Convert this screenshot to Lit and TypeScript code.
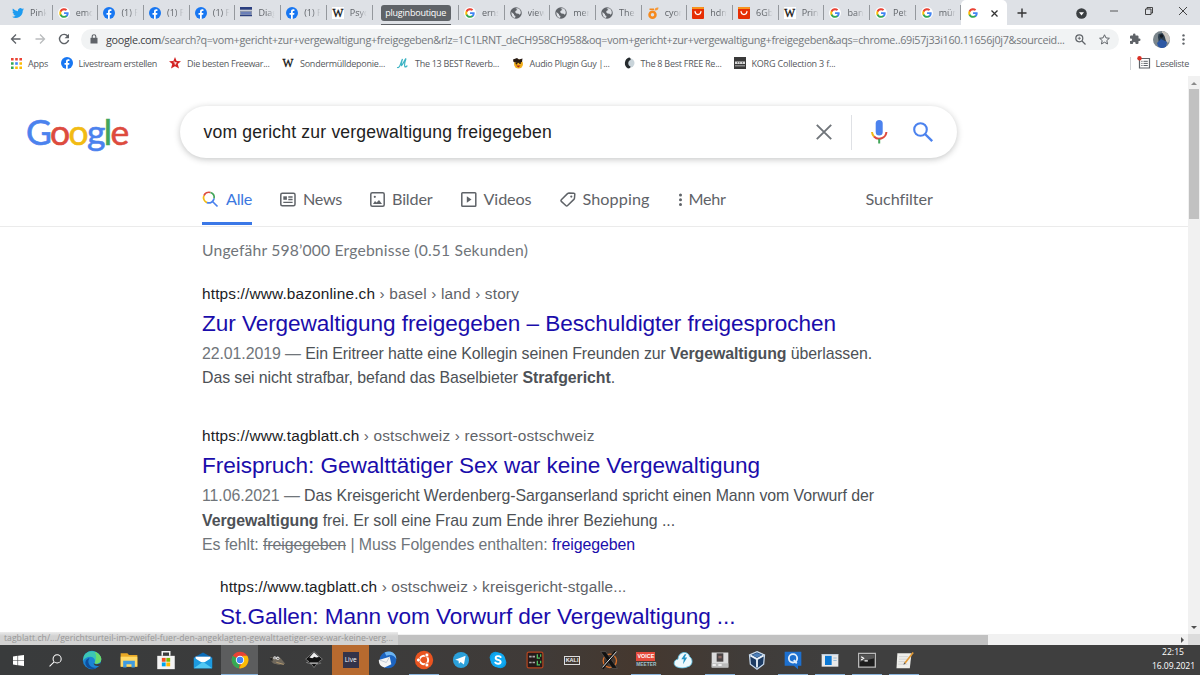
import { LitElement, html, css, svg } from "lit";
import { customElement, property } from "lit/decorators.js";
import { styleMap } from "lit/directives/style-map.js";

/** Single line of text whose tracking is adjusted to fill a given width. */
@customElement("fit-line")
class FitLine extends LitElement {
  @property({ type: Number }) w = 0;
  static styles = css`
    :host { display: inline-block; white-space: nowrap; flex: none; }
  `;
  firstUpdated() {
    const n = (this.textContent || "").length;
    const cur = this.getBoundingClientRect().width;
    if (this.w && n) this.style.letterSpacing = (this.w - cur) / n + "px";
  }
  render() {
    return html`<slot></slot>`;
  }
}

const ic = (w: number, h: number, vb: string, body: unknown) =>
  html`<svg width=${w} height=${h} viewBox=${vb} fill="none">${body}</svg>`;

const googleG = svg`
  <path fill="#4285f4" d="M23 12.3c0-.8-.1-1.600-.2-2.300H12v4.500h6.200c-.3 1.400-1.100 2.600-2.300 3.400v2.900h3.700c2.200-2 3.400-4.900 3.400-8.500z"/>
  <path fill="#34a853" d="M12 23.500c3.100 0 5.700-1 7.600-2.800l-3.700-2.900c-1 .7-2.400 1.100-3.900 1.100-3 0-5.500-2-6.400-4.700H1.800v3c1.900 3.700 5.700 6.300 10.200 6.300z"/>
  <path fill="#fbbc05" d="M5.600 14.200a7 7 0 0 1 0-4.400v-3H1.800a11.500 11.500 0 0 0 0 10.400z"/>
  <path fill="#ea4335" d="M12 5.100c1.700 0 3.200.6 4.400 1.700l3.300-3.300A11.500 11.500 0 0 0 1.800 6.800l3.800 3C6.500 7.100 9 5.100 12 5.100z"/>`;
const icons: Record<string, unknown> = {
  google: ic(12, 12, "0 0 24 24", svg`<circle cx="12" cy="12" r="12" fill="#fff"/><g transform="translate(2 2) scale(.84)">${googleG}</g>`),
  fb: ic(12, 12, "0 0 24 24", svg`<circle cx="12" cy="12" r="12" fill="#1877f2"/><path fill="#fff" d="M10 24v-8.500H7V12h3V9.400C10 6.400 11.800 4.700 14.500 4.700c1.300 0 2.400.2 2.400.2v3h-1.500c-1.500 0-1.900.9-1.900 1.800V12h3.300l-.5 3.500h-2.800V24z"/>`),
  twitter: ic(12, 12, "0 0 24 24", svg`<path fill="#1d9bf0" d="M24 4.600a10 10 0 0 1-2.800.8 5 5 0 0 0 2.100-2.700 10 10 0 0 1-3.100 1.200 4.900 4.900 0 0 0-8.400 4.500A14 14 0 0 1 1.700 3.200a4.900 4.900 0 0 0 1.500 6.500 5 5 0 0 1-2.200-.6 4.900 4.900 0 0 0 3.900 4.900 5 5 0 0 1-2.200.1 4.900 4.900 0 0 0 4.600 3.400A10 10 0 0 1 0 19.500 14 14 0 0 0 21.500 7.100 10 10 0 0 0 24 4.600z"/>`),
  dia: ic(12, 12, "0 0 12 12", svg`<path fill="#8b95ab" d="M0 0h12v12H0z"/><path fill="#2b3f80" d="M0 0h12v2.500H0z"/><path fill="#c8ccd5" d="M0 3h12v1H0z"/><path fill="#6b7fb8" d="M1 5h10v2.500H1z"/><path fill="#2b3f80" d="M0 8h12v1H0z"/><path fill="#dfe2e8" d="M0 9.500h12V12H0z"/>`),
  wiki: html`<span class="wiki">W</span>`,
  globe: ic(12, 12, "0 0 24 24", svg`<circle cx="12" cy="12" r="11.500" fill="#5f6368"/><path fill="#dee1e6" d="M3 10l5 4.500v2L11 18l-1 4C6 21.500 2 17 3 10zM11 3l5-.4c4 2 6 5 5.500 10l-2 3-2.500-2-4-.5-3-3 2-3 3-1z"/>`),
  orange: ic(12, 12, "0 0 24 24", svg`<circle cx="11" cy="15.500" r="6" stroke="#f58a1f" stroke-width="5"/><path fill="#f58a1f" d="M5 3h9v3H5z"/><path fill="#f79a3a" d="M15 7c0-5 4-7 8-6 0 4-3 7-8 6z"/>`),
  ali: ic(12, 12, "0 0 24 24", svg`<rect width="24" height="24" rx="2" fill="#e62e04"/><path fill="#f7941d" d="M0 2a2 2 0 0 1 2-2h20a2 2 0 0 1 2 2v2H0z"/><path stroke="#fff" stroke-width="2.500" stroke-linecap="round" d="M6 9c1 8 11 8 12 0"/>`),
};

type Tab = [string, string];
const tabsLeft: Tab[] = [["twitter", "Pink"], ["google", "emo"], ["fb", "(1) F"], ["fb", "(1) F"], ["fb", "(1) F"], ["dia", "Diag"], ["fb", "(1) F"], ["wiki", "Psyc"]];
const tabsRight: Tab[] = [["google", "erns"], ["globe", "view"], ["globe", "mer"], ["globe", "The"], ["orange", "cyon"], ["ali", "hdm"], ["ali", "6Gb"], ["wiki", "Prin"], ["google", "ban"], ["google", "Pet"], ["google", "mün"]];

const star = "M12 2.500l2.900 6.300 6.900.7-5.200 4.600 1.500 6.800L12 17.400 5.900 20.900l1.500-6.800L2.200 9.500l6.900-.7z";

const bookmarks: { icon: unknown; text: string; w: number; gap: number }[] = [
  { icon: ic(11, 11, "0 0 11 11", svg`
      <path fill="#ea4335" d="M0 0h2.600v2.600H0zM4.200 0h2.600v2.600H4.200zM8.400 0H11v2.600H8.400z"/>
      <path fill="#34a853" d="M0 4.200h2.600v2.600H0zM0 8.400h2.600V11H0z"/><path fill="#4285f4" d="M4.200 4.200h2.600v2.600H4.200z"/>
      <path fill="#fbbc05" d="M8.400 4.200H11v2.600H8.400zM4.200 8.400h2.600V11H4.200zM8.400 8.400H11V11H8.400z"/>`), text: "Apps", w: 20, gap: 12.500 },
  { icon: icons.fb, text: "Livestream erstellen", w: 78.500, gap: 12 },
  { icon: ic(12, 12, "0 0 24 24", svg`<path fill="#d32323" d="M12 0l3.200 8L24 8.500l-6.500 5.700L20 23l-8-4.700L4 23l2.500-8.800L0 8.500 8.800 8z"/><path stroke="#fff" stroke-width="1.500" d="M9 10h3v5M13 15v-4l3 1"/>`), text: "Die besten Freewar...", w: 82.500, gap: 12.500 },
  { icon: icons.wiki, text: "Sondermülldeponie...", w: 85, gap: 12 },
  { icon: ic(12, 12, "0 0 24 24", svg`<path stroke="#3fb4c4" stroke-width="2.400" stroke-linecap="round" d="M1 21c5 2 7-12 10-17-2 6-3 11-2 13 3-2 6-11 9-14-2 6-4 14-2 17 2 0 3-1 4-2"/>`), text: "The 13 BEST Reverb...", w: 84, gap: 12.500 },
  { icon: ic(12, 12, "0 0 24 24", svg`<circle cx="13" cy="14" r="9" fill="#f2b01e"/><path fill="#2a1c14" d="M2 5l8-3 4 3 7-2-1 7-8 2-9-2z"/><circle cx="9" cy="13" r="2" fill="#2a1c14"/><circle cx="16" cy="12" r="2" fill="#2a1c14"/><path fill="#a8271c" d="M8 17h9l-4 4z"/>`), text: "Audio Plugin Guy |...", w: 80, gap: 13 },
  { icon: ic(12, 12, "0 0 24 24", svg`<circle cx="14" cy="12" r="9" fill="#c9d4da"/><path fill="#262b2e" d="M12 1C3 3 0 18 10 23c4 0 5-2 5-4-6-2-6-11 0-13 1-2 0-5-3-5z"/>`), text: "The 8 Best FREE Re...", w: 81, gap: 12 },
  { icon: ic(12, 12, "0 0 12 12", svg`<path fill="#3a3a3a" d="M0 0h12v12H0z"/><path fill="#d8d8d8" d="M1 4.500h10v2.500H1zM1 8.600h10v.6H1z"/><path fill="#3a3a3a" d="M3 5h.6v1.500H3zM5.500 5h.6v1.500h-.6zM8.200 5h.6v1.500h-.6z"/>`), text: "KORG Collection 3 f...", w: 84, gap: 0 },
];

type Task = { icon: unknown; state?: string };
const s = (body: unknown) => ic(20, 20, "0 0 24 24", body);
const tasks: Task[] = [
  { icon: ic(11, 11, "0 0 22 22", svg`<path fill="#fff" d="M0 3l9-1.300v8.800H0zM10.200 1.500L22 0v10.500H10.200zM0 11.700h9v8.800L0 19.200zM10.200 11.700H22V22l-11.800-1.500z"/>`) },
  { icon: ic(13, 13, "0 0 24 24", svg`<circle cx="15" cy="9" r="7.500" stroke="#fff" stroke-width="1.900"/><path stroke="#fff" stroke-width="1.900" d="M9.500 14.500L1 23"/>`) },
  { icon: s(svg`<circle cx="12" cy="12" r="11" fill="#1b84d4"/><path fill="#3cc6b4" d="M2 8C5-1 20-1 23 10c1 5-4 7-8 6 2-4-1-8-5-8-4 0-7 2-9 5z"/><path fill="#6bdb6a" d="M15 2c5 1 9 6 8 10-1 4-5 5-8 4 2-4 3-9 0-14z"/><path fill="#0f4f9c" d="M9 10c-4 5 1 13 9 11-6 4-13 1-14-5 0-3 2-6 5-6z"/><path fill="#3b3b3b" d="M14 16c3 2 7 1 9-1l-2 4c-4 1-7-.5-7-3z"/>`) },
  { icon: s(svg`<path fill="#e8a825" d="M2 4h8l2 2h10v14H2z"/><path fill="#ffd966" d="M2 8h20v12H2z"/><path fill="#3f9be0" d="M5 13h14v8h-4v-4H9v4H5z"/>`) },
  { icon: s(svg`<path fill="#f4f4f4" d="M1.500 7h21v16h-21z"/><path stroke="#f4f4f4" stroke-width="1.800" d="M7.500 7V2h9v5"/><path fill="#f25022" d="M7 9.500h4.600v4.600H7z"/><path fill="#7fba00" d="M12.400 9.500H17v4.600h-4.600z"/><path fill="#00a4ef" d="M7 15h4.600v4.600H7z"/><path fill="#ffb900" d="M12.400 15H17v4.600h-4.600z"/>`) },
  { icon: s(svg`<path fill="#0b6cb8" d="M1 9l11-6 11 6v13H1z"/><path fill="#fff" d="M3 8h18v7H3z"/><path fill="#1c9ae0" d="M1 9l11 7L23 9v13H1z"/><path fill="#50c8f4" d="M1 22l11-8 11 8z"/>`) },
  { icon: s(svg`<circle cx="12" cy="12" r="10" fill="#e94235"/><path fill="#34a853" d="M3.300 7L12 12l-1 10A10 10 0 0 1 3.300 7z"/><path fill="#fbbc05" d="M20.700 7A10 10 0 0 1 11 22l5-10-1-5z"/><circle cx="12" cy="12" r="5" fill="#fff"/><circle cx="12" cy="12" r="3.900" fill="#4285f4"/>`), state: "active" },
  { icon: ic(18, 18, "0 0 24 24", svg`<path fill="#6f685c" d="M3 8l5 1c4-2 8-1 10 2l5 6-6 1c-6 1-12-1-13-6z"/><circle cx="9" cy="9" r="2" fill="#eee"/><circle cx="13" cy="9.500" r="2.200" fill="#eee"/><path fill="#222" d="M8.500 8.500H10V10H8.500zM12.500 9H14v1.500h-1.500zM2 10l4-1v5z"/><path stroke="#b59a70" stroke-width="1.300" d="M11 15l10 3"/>`) },
  { icon: s(svg`<path fill="#111" stroke="#bbb" stroke-width=".6" d="M12 2l10 9-4 3 2 2-5 1-3 4-3-4-6-2 3-1-4-3z"/><path fill="#eee" d="M12 3l6 5.500-3.500.5-2-1-2.500 2-3.500-1z"/><path fill="#ccc" d="M6 15h12l-2 1.500H8z"/>`) },
  { icon: html`<span class="live">Live</span>`, state: "orange" },
  { icon: s(svg`<circle cx="12" cy="12" r="10" fill="#1d64c0"/><path fill="#6cb4f2" d="M8 3c6-3 14 0 14 8-3-5-7-6-12-4z"/><path fill="#f4f4f4" d="M1 12l13-4 2 9-8 4c-5-1-7-4-7-9z"/><path stroke="#b9c3cf" stroke-width="1" d="M2 12l8 3 4-7"/>`) },
  { icon: s(svg`<circle cx="12" cy="12" r="11" fill="#e95420"/><circle cx="12" cy="12" r="5" stroke="#fff" stroke-width="2.400"/><g fill="#fff" stroke="#e95420" stroke-width="1"><circle cx="5.300" cy="12" r="2.400"/><circle cx="15.500" cy="6" r="2.400"/><circle cx="15.500" cy="18" r="2.400"/></g>`), state: "run" },
  { icon: s(svg`<circle cx="12" cy="12" r="9.700" fill="#2ba0da"/><path fill="#fff" d="M5 11.800L17.500 7l-2 10.500-4-3-2 2-.5-3.500z"/>`) },
  { icon: s(svg`<circle cx="9" cy="9" r="7" fill="#0b9ce4"/><circle cx="15" cy="15" r="7" fill="#0b9ce4"/><circle cx="12" cy="12" r="9" fill="#10a9f2"/><path stroke="#fff" stroke-width="2.300" stroke-linecap="round" d="M15.200 8.500c-1.500-1.800-6-1.600-6 1 0 3.200 6 1.600 6 4.800 0 2.700-5 2.800-6.500.7"/>`) },
  { icon: s(svg`<rect x="2.500" y="2.500" width="19" height="19" rx="2" fill="#241a1a" stroke="#b3441f" stroke-width="1.500"/><path fill="#4fbf5f" d="M14 5h1.600v4H18v1.500h-4zM14 13h1.600v4H18v1.500h-4zM18 5h1.500v3H18zM18 13h1.500v3H18z"/><path fill="#aaa" d="M5 7h3v2H5zM9 7h3v2H9zM5 14h3v2H5zM9 14h3v2H9z"/>`) },
  { icon: html`<span class="kali">KALI</span>` },
  { icon: s(svg`<circle cx="13" cy="13" r="8" stroke="#d86e28" stroke-width="1.600"/><path fill="#111" stroke="#777" stroke-width=".5" d="M2 2h6l14 20h-6z"/><path stroke="#111" stroke-width="3.500" d="M20 2L4 22"/><path stroke="#eee" stroke-width="1.200" d="M21 2L4 21"/>`) },
  { icon: html`<span class="voice"><b>VOICE</b><i>MEETER</i></span>`, state: "run" },
  { icon: s(svg`<path fill="#eef9fd" stroke="#5cc0e4" stroke-width="1" d="M4 20c-5-3-2-9 2-9 0-9 12-11 14-3 5 4 3 11-2 12-4 2-10 2-14 0z"/><path fill="#2494c4" d="M14 5l-4 6h3l-1 6 5-8h-3l2-4z"/>`) },
  { icon: s(svg`<path fill="#dcdcdc" d="M2 3h20v18H2z"/><path fill="#bbb" d="M2 16h20v5H2z"/><path fill="#4a4444" d="M8 4h8v10H8z"/><path fill="#8a6a64" d="M10 7h4v3h-4z"/><path fill="#fff" d="M3 17h4v2H3zM10 17h4v2h-4z"/>`), state: "run" },
  { icon: s(svg`<path fill="#1c3b63" stroke="#c7daee" stroke-width="1.500" d="M12 2l9 4-1 11-8 6-8-6L3 6z"/><path stroke="#e8f1fa" stroke-width="2.200" d="M4 6.500l8 4.500 8-4.500M12 11v10"/><path fill="#4d7fb8" d="M6 6l6-2.500L18 6l-6 3z"/>`) },
  { icon: s(svg`<path fill="#1d70cf" d="M2 2h20v17h-4v4l-5-4H2z"/><circle cx="12" cy="10" r="5" stroke="#e4effb" stroke-width="2.200"/><path stroke="#e4effb" stroke-width="2.200" d="M13 12l3.500 4"/>`), state: "run" },
  { icon: s(svg`<path fill="#e9e9e9" d="M2 5h20v15H2z"/><path fill="#0b78d4" d="M6 7h8v11H6z"/><path fill="#9bbbd6" d="M16 9h4v1.200h-4zM16 12h4v1.200h-4z"/><path fill="#bcd" d="M2 5h20v1.200H2z"/>`), state: "run" },
  { icon: s(svg`<path fill="#1d1d1d" stroke="#b9b9b9" stroke-width="1.600" d="M2 4h20v16.500H2z"/><path fill="#555" d="M3 5h18v5L3 14z"/><path stroke="#fff" stroke-width="1.400" d="M5 8l3 2-3 2M9 13h4"/>`), state: "run" },
  { icon: s(svg`<path fill="#eeeeea" d="M4 4h17l-2 18H3z"/><path stroke="#ccc" d="M6 8h11M6 11h10M5.500 14h9M5 17h11"/><path stroke="#e39a35" stroke-width="2" d="M23 3l-10 13"/><path fill="#555" d="M12 15l2 1-2.500 2z"/>`), state: "run" },
];

@customElement("app-root")
class AppRoot extends LitElement {
  static styles = css`
    :host { display: flex; flex-direction: column; width: 1200px; height: 675px; overflow: hidden; background: #fff; color: #4d5156; font-family: "Liberation Sans", Arial, sans-serif; }
    * { box-sizing: border-box; }
    svg { display: block; flex: none; overflow: visible; }
    .ui { font-family: "Open Sans", "Noto Sans", sans-serif; }

    .tabs { display: flex; height: 25px; flex: none; background: #dee1e6; padding-left: 7px; font-size: 9px; color: #5f6368; }
    .tab { width: 45.7px; flex: none; height: 25px; display: flex; align-items: center; padding: 1px 0 0 5px; gap: 6px; background: linear-gradient(#94989d, #94989d) right 5px / 1px 15px no-repeat; }
    .tab .label { width: 17px; overflow: hidden; white-space: nowrap; line-height: 14px; -webkit-mask-image: linear-gradient(90deg, #000 50%, transparent 98%); mask-image: linear-gradient(90deg, #000 50%, transparent 98%); }
    .wiki { width: 12px; height: 12px; background: #fff; color: #111; font: 11.500px/12px "Liberation Serif", serif; -webkit-text-stroke: .3px #111; display: flex; justify-content: center; flex: none; }
    .group { width: 86.400px; flex: none; padding: 5px 8px 0; background: linear-gradient(#94989d, #94989d) right 5px / 1px 15px no-repeat; display: flex; flex-direction: column; justify-content: space-between; }
    .chip { height: 16px; border-radius: 3px; background: #5f6368; color: #fff; display: flex; justify-content: center; line-height: 15px; }
    .line { height: 1.500px; background: #5f6368; }
    .current { width: 46px; flex: none; background: #fff; border-radius: 5px 5px 0 0; display: flex; align-items: center; gap: 12px; padding: 1px 0 0 6px; }
    .plus { margin: 8px 0 0 10px; }
    .win { margin-left: auto; display: flex; gap: 26.500px; padding: 7px 13px 0 0; }
    .drop { margin-right: -3px; padding-top: 1px; }

    .toolbar { display: flex; align-items: center; height: 27px; flex: none; padding: 1px 13px 0 10px; }
    .toolbar > svg { margin-right: 12px; }
    .omni { width: 1038px; height: 21px; border-radius: 11px; background: #f1f3f4; display: flex; align-items: center; padding: 0 9px 0 9px; font-size: 10.800px; color: #74787c; margin-right: 10px; margin-left: -1px; }
    .omni .dark { color: #3c4043; }
    .omni .lock { margin-right: 8px; }
    .omni .end { margin-left: auto; display: flex; gap: 13px; }
    .avatar { width: 17px; height: 17px; margin-right: 12px; }

    .marks { display: flex; align-items: center; height: 24px; flex: none; padding: 0 11px 2px 11px; font-size: 9px; color: #55585c; }
    .mark { display: flex; align-items: center; gap: 6px; flex: none; }
    .reading { margin-left: auto; display: flex; align-items: center; gap: 6px; border-left: 1px solid #d0d3d6; padding-left: 7px; height: 13px; }

    .mid { display: flex; height: 558px; flex: none; }
    .page { flex: 1; overflow: hidden; }
    .head { height: 150.500px; border-bottom: 1px solid #ebebeb; }
    .top { display: flex; padding: 30px 0 0 27px; }
    .logo { font: 35.500px/51px Lato, sans-serif; width: 153px; height: 52px; margin-left: -1px; margin-right: 1px; }
    .b { color: #4b82ee; -webkit-text-stroke: .6px #4b82ee; } .r { color: #dd4b3e; -webkit-text-stroke: .6px #dd4b3e; } .y { color: #f2bb13; -webkit-text-stroke: .6px #f2bb13; } .g { color: #43a65a; -webkit-text-stroke: .6px #43a65a; }
    .search { width: 777px; height: 52px; border-radius: 26px; box-shadow: 0 1.500px 6px rgba(32, 33, 36, .26); display: flex; align-items: center; padding: 0 24px 0 23.500px; font-size: 17.600px; color: #222; }
    .search .x { margin-left: auto; }
    .vr { width: 1px; height: 35px; background: #dfe1e5; margin: 0 18px 0 19px; }
    .search .mag { margin-left: 25px; }
    .nav { display: flex; height: 68px; padding: 16px 0 0 202px; font: 16.200px/50px Lato, sans-serif; color: #5f6368; }
    .item { display: flex; align-items: center; gap: 7px; height: 51px; margin-right: 28px; padding-bottom: 1px; }
    .sel { color: #3c78e0; border-bottom: 3px solid #3b78e7; padding-top: 2px; padding-bottom: 0; width: 50px; gap: 8px; margin-right: 28px; }
    .more { gap: 6px; margin-right: 140px; }

    .results { padding-left: 202px; font-size: 15.900px; line-height: 24.400px; }
    .stats { font: 15.700px/24px Lato, sans-serif; color: #70757a; padding-top: 11px; height: 55px; }
    .cite { height: 24px; line-height: 24px; color: #5f6368; font-size: 15.400px; }
    .cite .host { color: #202124; }
    .title { height: 36px; line-height: 36px; font-size: 22.600px; color: #1a0dab; }
    .row { height: 24.400px; }
    .res { height: 142.900px; }
    .res2 { height: 150.200px; }
    .sub { padding-left: 18px; }
    .muted { color: #70757a; }
    .link { color: #1a0dab; }

    .vbar { width: 12px; background: #f1f1f1; display: flex; flex-direction: column; align-items: center; padding: 6px 0 5px; }
    .vthumb { width: 10px; height: 130px; background: #c1c1c1; margin: 4px 0 auto; }
    .hbar { height: 11px; flex: none; background: #f1f1f1; display: flex; align-items: center; position: relative; }
    .hthumb { width: 976px; height: 10px; background: #c1c1c1; margin-left: 12px; }
    .right { margin-left: auto; margin-right: 16px; }
    .corner { width: 12px; height: 11px; background: #dcdcdc; margin-left: -12px; }
    .status { position: absolute; left: 0; bottom: 0; width: 398px; height: 13px; padding-left: 4px; background: linear-gradient(#ececec, #d2d2d2 30%, #d2d2d2); font-size: 8.600px; line-height: 12px; color: #979797; }

    .taskbar { height: 30px; flex: none; background: linear-gradient(90deg, #393b3c 0, #3c3c3c 30%, #403b38 45%, #45382f 53%, #403c39 62%, #3f3f3f 70%, #3f3f3f); display: flex; }
    .task { width: 36.920px; height: 30px; flex: none; display: flex; align-items: center; justify-content: center; }
    .run { background: linear-gradient(#8ab4dc, #8ab4dc) center bottom / 30px 1.500px no-repeat; }
    .active { background: linear-gradient(#8ab4dc, #8ab4dc) center bottom / 100% 1.500px no-repeat, #5c5d5e; }
    .orange { background: #b76a2f; }
    .live { width: 16px; height: 16px; background: #33334a; color: #fff; font: 6.500px/16px "Open Sans", sans-serif; text-align: center; }
    .kali { border: 1px solid #ddd; color: #eee; font: bold 5.500px/7px "Liberation Sans", sans-serif; padding: 0 1px; }
    .voice { width: 19px; display: flex; flex-direction: column; text-align: center; font: bold 5.400px/9px "Liberation Sans", sans-serif; color: #fff; }
    .voice b { background: #e64b3c; } .voice i { font-style: normal; line-height: 7px; font-size: 4.800px; color: #9fc0cc; }
    .clock { margin-left: auto; padding: 1px 5px 0 0; width: 60px; font-size: 8.600px; line-height: 13.800px; color: #fff; display: flex; flex-direction: column; align-items: flex-end; }
    .clock .time { padding-right: 11px; }
  `;

  tab([icon, label]: Tab) {
    return html`<div class="tab">${icons[icon]}<span class="label">${label}</span></div>`;
  }

  render() {
    return html`
      <div class="tabs ui">
        ${tabsLeft.map((t) => this.tab(t))}
        <div class="group"><div class="chip"><fit-line w="61">pluginboutique</fit-line></div><div class="line"></div></div>
        ${tabsRight.map((t) => this.tab(t))}
        <div class="current">${icons.google}${ic(7, 7, "0 0 7 7", svg`<path stroke="#333" stroke-width="1.300" d="M.5.500l6 6M6.500.500l-6 6"/>`)}</div>
        <div class="plus">${ic(10, 10, "0 0 10 10", svg`<path stroke="#333" stroke-width="1.400" d="M5 .5v9M.5 5h9"/>`)}</div>
        <div class="win">
          <span class="drop">${ic(11, 11, "0 0 11 11", svg`<circle cx="5.500" cy="5.500" r="5.300" fill="#3c4043"/><path fill="#fff" d="M3 4.200h5L5.500 7.600z"/>`)}</span>
          ${ic(8, 8, "0 0 8 8", svg`<path stroke="#333" stroke-width=".8" d="M0 4h8"/>`)}
          ${ic(8, 8, "0 0 8 8", svg`<path stroke="#333" stroke-width=".9" d="M.5 2h5.500v5.500H.500zM2 2V.500h5.500V6H6"/>`)}
          ${ic(8, 8, "0 0 8 8", svg`<path stroke="#333" stroke-width=".9" d="M0 0l8 8M8 0L0 8"/>`)}
        </div>
      </div>

      <div class="toolbar ui">
        ${ic(12, 12, "0 0 12 12", svg`<path stroke="#5f6368" stroke-width="1.300" d="M10.500 6H1.500M6 1.500L1.500 6 6 10.500"/>`)}
        ${ic(12, 12, "0 0 12 12", svg`<path stroke="#babcbe" stroke-width="1.300" d="M1.500 6h9M6 1.500L10.500 6 6 10.500"/>`)}
        ${ic(12, 12, "0 0 12 12", svg`<path stroke="#5f6368" stroke-width="1.400" d="M9.800 3.200A4.600 4.600 0 1 0 10.600 7"/><path fill="#5f6368" d="M11 .8v4.400H6.600z"/>`)}
        <div class="omni">
          <span class="lock">${ic(8, 10, "0 0 8 10", svg`<path fill="#5f6368" d="M.500 3.800h7v5.700h-7z"/><path stroke="#5f6368" stroke-width="1.100" d="M2.200 4V2.500a1.800 1.800 0 0 1 3.600 0V4"/>`)}</span>
          <fit-line w="958.500"><span class="dark">google.com</span>/search?q=vom+gericht+zur+vergewaltigung+freigegeben&rlz=1C1LRNT_deCH958CH958&oq=vom+gericht+zur+vergewaltigung+freigegeben&aqs=chrome..69i57j33i160.11656j0j7&sourceid...</fit-line>
          <span class="end">
            ${ic(11, 11, "0 0 11 11", svg`<circle cx="4.300" cy="4.300" r="3.500" stroke="#5f6368" stroke-width="1.200"/><path stroke="#5f6368" stroke-width="1.300" d="M7 7l3.500 3.500"/><path stroke="#5f6368" stroke-width=".8" d="M4.300 2.700v3.200M2.700 4.300h3.200"/>`)}
            ${ic(11, 11, "1 1 22 22", svg`<path stroke="#5f6368" stroke-width="2" d=${star}/>`)}
          </span>
        </div>
        ${ic(12, 12, "0 0 24 24", svg`<path fill="#5f6368" d="M20.500 11H19V7a2 2 0 0 0-2-2h-4V3.500a2.500 2.500 0 0 0-5 0V5H4a2 2 0 0 0-2 2v3.800h1.500a2.700 2.700 0 0 1 0 5.400H2V20c0 1.100.9 2 2 2h3.800v-1.500a2.700 2.700 0 0 1 5.400 0V22H17a2 2 0 0 0 2-2v-4h1.500a2.500 2.500 0 0 0 0-5z"/>`)}
        <span class="avatar">${ic(17, 17, "0 0 17 17", svg`<circle cx="8.500" cy="8.500" r="8.500" fill="#7b868c"/><path fill="#c9c4bd" d="M9 0a8.500 8.500 0 0 1 8 8.500L15 12 10 7 9 4z"/><path fill="#2b3d4d" d="M5.500 3l4-1 2 3 1.500 5-2 4-5-1-1-7z"/><path fill="#2d58a4" d="M4 12l4-4 6 3-1 4.700c-3 2-6 1.500-8-.5z"/><circle cx="8.500" cy="5" r="1.700" fill="#151b22"/>`)}</span>
        <span>${ic(3, 11, "0 0 3 11", svg`<g fill="#5f6368"><circle cx="1.500" cy="1.400" r="1.200"/><circle cx="1.500" cy="5.500" r="1.200"/><circle cx="1.500" cy="9.600" r="1.200"/></g>`)}</span>
      </div>

      <div class="marks ui">
        ${bookmarks.map((m) => html`<div class="mark" style=${styleMap({ marginRight: m.gap + "px" })}>${m.icon}<fit-line w=${m.w}>${m.text}</fit-line></div>`)}
        <div class="reading">
          ${ic(12, 12, "0 0 12 12", svg`<path stroke="#5f6368" stroke-width="1.200" d="M1.500 1.500h10v9.500h-10z"/><path stroke="#5f6368" stroke-width="1" d="M3.300 4.300h1.200M5.500 4.300h4.300M3.300 6.400h1.200M5.500 6.400h4.300M3.300 8.500h1.200M5.500 8.500h4.300"/><circle cx="1.500" cy="1.200" r="2.200" fill="#d93025"/>`)}
          <fit-line w="33.500">Leseliste</fit-line>
        </div>
      </div>

      <div class="mid">
        <div class="page">
          <div class="head">
            <div class="top">
              <div class="logo"><fit-line w="101.500"><span class="b">G</span><span class="r">o</span><span class="y">o</span><span class="b">g</span><span class="g">l</span><span class="r">e</span></fit-line></div>
              <div class="search">
                <fit-line w="348.500">vom gericht zur vergewaltigung freigegeben</fit-line>
                <span class="x">${ic(16, 16, "0 0 16 16", svg`<path stroke="#70757a" stroke-width="1.900" d="M.8.800l14.400 14.400M15.200.800L.8 15.200"/>`)}</span>
                <span class="vr"></span>
                ${ic(18, 24, "0 0 18 24", svg`
                  <rect x="5.700" y="0" width="7" height="15.500" rx="3.500" fill="#4b82ee"/>
                  <path stroke="#f2bb13" stroke-width="2" d="M2 12a7.200 7.200 0 0 0 2 4.500"/>
                  <path stroke="#dd4b3e" stroke-width="2" d="M4 16.500A7.200 7.200 0 0 0 16.400 12"/>
                  <path stroke="#43a65a" stroke-width="2" d="M9.200 19v4.500"/>`)}
                <span class="mag">${ic(20, 20, "0 0 20 20", svg`<circle cx="7.500" cy="7.500" r="6.300" stroke="#4b82ee" stroke-width="2.100"/><path stroke="#4b82ee" stroke-width="2.400" d="M12 12l7.200 7.200"/>`)}</span>
              </div>
            </div>
            <div class="nav">
              <div class="item sel">
                ${ic(16, 16, "0 0 16 16", svg`<g stroke-width="1.700"><path stroke="#dd4b3e" d="M1.900 4.600A5.400 5.400 0 0 1 8.500 1.500"/><path stroke="#43a65a" d="M8.500 1.500A5.400 5.400 0 0 1 12.100 7.500"/><path stroke="#f2bb13" d="M1.900 4.600A5.400 5.400 0 0 0 5 11.600"/><path stroke="#4b82ee" d="M5 11.600A5.400 5.400 0 0 0 12.100 7.500M10.500 10.500l5 5"/></g>`)}
                <fit-line w="26">Alle</fit-line>
              </div>
              <div class="item">
                ${ic(16, 15, "0 0 16 15", svg`<rect x=".8" y="1.300" width="14.200" height="12.400" rx="1.500" stroke="#5f6368" stroke-width="1.500"/><path fill="#5f6368" d="M3.300 4.300h3.600v3.500H3.300z"/><path stroke="#5f6368" stroke-width="1.300" d="M8.300 5h4.300M8.300 7.500h4.300M3.300 10.300h9.300"/>`)}
                <fit-line w="39">News</fit-line>
              </div>
              <div class="item">
                ${ic(15, 15, "0 0 15 15", svg`<rect x=".8" y=".8" width="13.400" height="13.400" rx="1.500" stroke="#5f6368" stroke-width="1.500"/><path fill="#5f6368" d="M3 12l2-3 1.500 1.500L9 8l3 4z"/><circle cx="4.800" cy="4.800" r="1.100" fill="#5f6368"/>`)}
                <fit-line w="40.500">Bilder</fit-line>
              </div>
              <div class="item">
                ${ic(16, 15, "0 0 16 15", svg`<rect x=".8" y=".8" width="14" height="13.400" rx=".8" stroke="#5f6368" stroke-width="1.500"/><path fill="#5f6368" d="M5.800 4.300l4.700 3.200-4.700 3.200z"/>`)}
                <fit-line w="48">Videos</fit-line>
              </div>
              <div class="item">
                ${ic(16, 15, "0 0 16 15", svg`<path stroke="#5f6368" stroke-width="1.500" stroke-linejoin="round" d="M9 1l5 .2c.6 0 .8.400.8.800L14.500 6c0 .6-.2 1-.6 1.400l-6.300 6.100c-.6.600-1.200.600-1.800 0L1.300 9.400c-.5-.6-.5-1.200 0-1.700L7.500 1.600C8 1.200 8.400 1 9 1z"/><circle cx="11.300" cy="4.600" r="1.100" fill="#5f6368"/>`)}
                <fit-line w="67">Shopping</fit-line>
              </div>
              <div class="item more">
                ${ic(5, 13, "0 0 5 13", svg`<g fill="#5f6368"><circle cx="2.500" cy="2" r="1.500"/><circle cx="2.500" cy="6.700" r="1.500"/><circle cx="2.500" cy="11.400" r="1.500"/></g>`)}
                <fit-line w="37">Mehr</fit-line>
              </div>
              <div class="item"><fit-line w="67">Suchfilter</fit-line></div>
            </div>
          </div>
          <div class="results">
            <div class="stats"><fit-line w="326">Ungefähr 598’000 Ergebnisse (0.51 Sekunden)</fit-line></div>
            <div class="res">
              <div class="cite"><fit-line w="317"><span class="host">https://www.bazonline.ch</span> › basel › land › story</fit-line></div>
              <div class="title"><fit-line w="634">Zur Vergewaltigung freigegeben – Beschuldigter freigesprochen</fit-line></div>
              <div class="row"><fit-line w="670"><span class="muted">22.01.2019 — </span>Ein Eritreer hatte eine Kollegin seinen Freunden zur <b>Vergewaltigung</b> überlassen.</fit-line></div>
              <div class="row"><fit-line w="413">Das sei nicht strafbar, befand das Baselbieter <b>Strafgericht</b>.</fit-line></div>
            </div>
            <div class="res2">
              <div class="cite"><fit-line w="392.500"><span class="host">https://www.tagblatt.ch</span> › ostschweiz › ressort-ostschweiz</fit-line></div>
              <div class="title"><fit-line w="558">Freispruch: Gewalttätiger Sex war keine Vergewaltigung</fit-line></div>
              <div class="row"><fit-line w="672"><span class="muted">11.06.2021 — </span>Das Kreisgericht Werdenberg-Sarganserland spricht einen Mann vom Vorwurf der</fit-line></div>
              <div class="row"><fit-line w="473"><b>Vergewaltigung</b> frei. Er soll eine Frau zum Ende ihrer Beziehung ...</fit-line></div>
              <div class="row muted"><fit-line w="433">Es fehlt: <s>freigegeben</s> | Muss Folgendes enthalten: <span class="link">freigegeben</span></fit-line></div>
            </div>
            <div class="sub">
              <div class="cite"><fit-line w="406.500"><span class="host">https://www.tagblatt.ch</span> › ostschweiz › kreisgericht-stgalle...</fit-line></div>
              <div class="title"><fit-line w="515.500">St.Gallen: Mann vom Vorwurf der Vergewaltigung ...</fit-line></div>
            </div>
          </div>
        </div>
        <div class="vbar">
          ${ic(6, 3, "0 0 6 3", svg`<path fill="#8a8a8a" d="M0 3l3-3 3 3z"/>`)}
          <div class="vthumb"></div>
          ${ic(6, 3, "0 0 6 3", svg`<path fill="#505050" d="M0 0l3 3 3-3z"/>`)}
        </div>
      </div>
      <div class="hbar">
        <div class="hthumb"></div>
        <span class="right">${ic(3, 6, "0 0 3 6", svg`<path fill="#505050" d="M0 0l3 3-3 3z"/>`)}</span>
        <div class="corner"></div>
        <div class="status ui"><fit-line w="389">tagblatt.ch/.../gerichtsurteil-im-zweifel-fuer-den-angeklagten-gewalttaetiger-sex-war-keine-verg...</fit-line></div>
      </div>
      <div class="taskbar">
        ${tasks.map((t) => html`<div class="task ${t.state || ""}">${t.icon}</div>`)}
        <div class="clock ui"><fit-line class="time" w="33">22:15</fit-line><fit-line w="43">16.09.2021</fit-line></div>
      </div>
    `;
  }
}
